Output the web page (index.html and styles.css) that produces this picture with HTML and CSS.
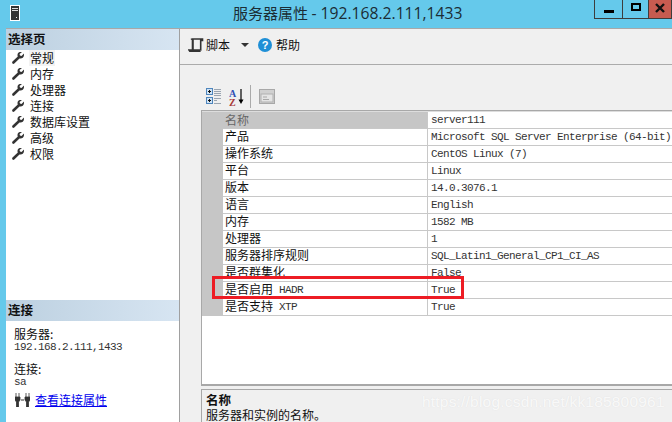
FILE: index.html
```html
<!DOCTYPE html>
<html lang="zh-CN">
<head>
<meta charset="utf-8">
<title>服务器属性</title>
<link rel="stylesheet" href="styles.css">
</head>
<body>
<div class="window">
  <header class="titlebar">
    <svg class="app-icon" width="10" height="16" viewBox="0 0 10 16"><rect width="10" height="16" fill="#fff"/><rect x="1" y="1" width="8" height="14" fill="#333"/><rect x="2" y="3" width="6" height="1" fill="#ddd"/><rect x="2" y="5" width="6" height="1" fill="#ddd"/><rect x="6" y="12" width="1" height="1" fill="#eee"/></svg>
    <div class="title">服务器属性 <span class="title-latin">- 192.168.2.111,1433</span></div>
    <div class="winbtns">
      <div class="winbtn btn-min"><span class="glyph-min"></span></div>
      <div class="winbtn btn-max"><span class="glyph-max"></span></div>
      <div class="winbtn close"><svg width="10" height="10" viewBox="0 0 10 10"><path d="M1 1l8 8M9 1l-8 8" stroke="#111" stroke-width="2.4"/></svg></div>
    </div>
  </header>
  <div class="body">
    <aside class="side">
      <div class="side-head">选择页</div>
      <ul class="pages">
        <li class="page"><svg class="wrench"><use href="#wr"/></svg><span class="page-label active">常规</span></li>
        <li class="page"><svg class="wrench"><use href="#wr"/></svg><span class="page-label">内存</span></li>
        <li class="page"><svg class="wrench"><use href="#wr"/></svg><span class="page-label">处理器</span></li>
        <li class="page"><svg class="wrench"><use href="#wr"/></svg><span class="page-label">连接</span></li>
        <li class="page"><svg class="wrench"><use href="#wr"/></svg><span class="page-label">数据库设置</span></li>
        <li class="page"><svg class="wrench"><use href="#wr"/></svg><span class="page-label">高级</span></li>
        <li class="page"><svg class="wrench"><use href="#wr"/></svg><span class="page-label">权限</span></li>
      </ul>
      <div class="side-head">连接</div>
      <div class="conn">
        <div class="conn-label">服务器:</div>
        <div class="mono conn-value">192.168.2.111,1433</div>
        <div class="conn-label second">连接:</div>
        <div class="mono conn-value">sa</div>
        <div class="conn-link-row">
          <svg width="15" height="14" viewBox="0 0 15 14"><path d="M1 0v4M4 0v4M0 4h5v3l-1.500 2v5h-2V9L0 7zM11 0v4M14 0v4M10 4h5v3l-1.500 2v5h-2V9L10 7z" fill="#333" stroke="#333" stroke-width=".8"/><path d="M6 7h3" stroke="#333"/></svg>
          <a class="conn-link" href="#">查看连接属性</a>
        </div>
      </div>
    </aside>
    <main class="main">
      <div class="toolbar">
        <svg width="16" height="14" viewBox="0 0 16 14"><path d="M4.500 1h10v1.500h-1.800v9.500H4.500zM3 1.500c1-1 2-.5 2 .5v9.500M1 12h9l1.500 1.500H2z" fill="none" stroke="#333" stroke-width="1.600"/></svg>
        <span class="tool-text">脚本</span>
        <span class="caret"></span>
        <span class="help">?</span>
        <span class="tool-text">帮助</span>
      </div>
      <div class="prop-tools">
        <svg class="ico-cat" width="16" height="17" viewBox="0 0 16 17"><rect x=".5" y=".5" width="6" height="6" fill="#cfe3f5" stroke="#4f86bd"/><path d="M2 3.500h3M3.500 2v3" stroke="#111"/><rect x=".5" y="9.500" width="6" height="6" fill="#cfe3f5" stroke="#4f86bd"/><path d="M2 12.500h3M3.500 11v3" stroke="#111"/><path d="M8 1.500h7M8 3.500h7M8 5.500h7M8 7.500h7M8 10.500h7M8 12.500h3M8 15.500h7" stroke="#9aa5b1"/></svg>
        <svg class="ico-az" width="15" height="18" viewBox="0 0 15 18"><text class="az-a" x="0" y="8.500">A</text><text class="az-z" x="0" y="17.500">Z</text><path d="M12 1v13" stroke="#000" stroke-width="1.200"/><path d="M9.500 11.500h5L12 16z" fill="#000"/></svg>
        <span class="tool-sep"></span>
        <svg class="ico-page" width="16" height="15" viewBox="0 0 16 15"><rect x=".5" y=".5" width="15" height="14" fill="#d0d0d0" stroke="#a8a8a8"/><rect x="2" y="5" width="12" height="8" fill="#e4e4e4" stroke="#b0b0b0"/><path d="M4 8h4M4 10.500h6" stroke="#a8a8a8"/></svg>
      </div>
      <section class="grid">
        <div class="row first selected"><div class="gutter"></div><div class="name">名称</div><div class="value mono">server111</div></div>
        <div class="row"><div class="gutter"></div><div class="name">产品</div><div class="value mono">Microsoft SQL Server Enterprise (64-bit)</div></div>
        <div class="row"><div class="gutter"></div><div class="name">操作系统</div><div class="value mono">CentOS Linux (7)</div></div>
        <div class="row"><div class="gutter"></div><div class="name">平台</div><div class="value mono">Linux</div></div>
        <div class="row"><div class="gutter"></div><div class="name">版本</div><div class="value mono">14.0.3076.1</div></div>
        <div class="row"><div class="gutter"></div><div class="name">语言</div><div class="value mono">English</div></div>
        <div class="row"><div class="gutter"></div><div class="name">内存</div><div class="value mono">1582 MB</div></div>
        <div class="row"><div class="gutter"></div><div class="name">处理器</div><div class="value mono">1</div></div>
        <div class="row"><div class="gutter"></div><div class="name">服务器排序规则</div><div class="value mono">SQL_Latin1_General_CP1_CI_AS</div></div>
        <div class="row"><div class="gutter"></div><div class="name">是否群集化</div><div class="value mono">False</div></div>
        <div class="row"><div class="gutter"></div><div class="name">是否启用<span class="mono name-latin"> HADR</span></div><div class="value mono">True</div></div>
        <div class="row"><div class="gutter"></div><div class="name">是否支持<span class="mono name-latin"> XTP</span></div><div class="value mono">True</div></div>
        <div class="highlight"></div>
      </section>
      <section class="desc">
        <div class="desc-title">名称</div>
        <div class="desc-text">服务器和实例的名称。</div>
      </section>
    </main>
  </div>
  <div class="watermark">https://blog.csdn.net/kk185800961</div>
</div>
<svg class="defs" width="0" height="0"><defs><symbol id="wr" viewBox="0 0 12 12"><path d="M12 1.500 9.500 4 8 3.500 7.500 2 10 0C8 -.5 5.500 .5 5.500 3c0 .8.100 1.200.3 1.500L.5 9.500c-.6.800-.4 1.500 0 2 .5.500 1.200.5 1.800 0l5.200-5.100c2.500.8 5-1.200 4.500-4.900z" fill="#333"/></symbol></defs></svg>
</body>
</html>
```
FILE: styles.css
```css
* { box-sizing: border-box; }
html, body { margin: 0; padding: 0; }
body { width: 672px; height: 422px; overflow: hidden; font-family: "Noto Sans CJK SC", sans-serif; font-size: 12px; color: #111; }
.defs { position: absolute; }
.window { position: relative; width: 672px; height: 422px; background: #65c9eb; display: flex; flex-direction: column; overflow: hidden; }
.mono { font-family: "Liberation Mono", "Noto Sans CJK SC", monospace; font-size: 11px; letter-spacing: -.6px; color: #333; }

.titlebar { height: 28px; flex: none; display: flex; align-items: flex-start; position: relative; padding-left: 10px; }
.app-icon { margin-top: 5px; }
.title { position: absolute; left: 233px; top: 2px; font-size: 15px; line-height: 22px; color: #1b2d35; white-space: nowrap; }
.title-latin { font-family: "Open Sans", sans-serif; font-size: 15.700px; }
.winbtns { margin-left: auto; display: flex; height: 19px; }
.winbtn { border: 1px solid #3d3d3d; border-top: none; display: flex; align-items: center; justify-content: center; margin-left: -1px; }
.btn-min { width: 29px; }
.btn-max { width: 27px; }
.winbtn.close { width: 24px; background: #c75b50; }
.glyph-min { width: 10px; height: 3px; background: #000; margin-top: 5px; }
.glyph-max { width: 10px; height: 8px; border: 2px solid #000; margin-top: -4px; }
.close svg { margin-top: -3px; }

.body { flex: 1; display: flex; margin-left: 6px; border-top: 1px solid #a8a8a8; min-height: 0; }
.side { width: 174px; flex: none; background: #fff; border-right: 1px solid #a0a0a0; display: flex; flex-direction: column; }
.side-head { height: 21px; flex: none; padding-left: 2px; font-weight: 700; font-size: 12.500px; line-height: 20px; background: linear-gradient(90deg, #bcd0e0, #d7e5f2); color: #111; }
.pages { list-style: none; margin: 0; padding: 0; flex: 1; }
.page { height: 16px; display: flex; align-items: center; }
.wrench { width: 12px; height: 12px; margin-left: 6px; }
.page-label { margin-left: 5px; padding: 0 1px; line-height: 16px; }
.page-label.active { background: #f3f3f3; }
.conn { height: 101px; flex: none; padding: 6px 0 0 8px; }
.conn-label { line-height: 14px; }
.conn-label.second { margin-top: 9px; }
.conn-value { line-height: 12px; }
.conn-link-row { display: flex; align-items: center; gap: 5px; margin-top: 4px; margin-left: 1px; }
.conn-link { color: #0000ee; text-decoration: underline; line-height: 15px; }

.main { flex: 1; min-width: 0; background: #f0f0f0; display: flex; flex-direction: column; }
.toolbar { height: 36px; flex: none; border-bottom: 1px solid #ababab; display: flex; align-items: center; padding: 0 0 4px 8px; }
.tool-text { margin-left: 2px; }
.caret { width: 0; height: 0; border: 4px solid transparent; border-top: 4px solid #333; border-bottom: none; margin: 1px 9px 0 11px; }
.help { width: 14px; height: 14px; border-radius: 50%; background: #1f8fd6; color: #fff; font: 700 11px/14px "Liberation Sans", sans-serif; text-align: center; margin-right: 2px; }
.prop-tools { height: 45px; flex: none; display: flex; align-items: flex-end; padding: 0 0 2px 26px; }
.ico-cat { margin-bottom: 3px; }
.ico-az { margin: 0 0 2px 7px; }
.az-a, .az-z { font: 700 10px "Liberation Serif", serif; }
.az-a { fill: #2f4fb5; }
.az-z { fill: #a83a3a; }
.tool-sep { width: 1px; height: 23px; background: #aaa; margin: 0 8px 0 6px; }
.ico-page { margin-bottom: 4px; }

.grid { position: relative; height: 276px; flex: none; margin: 0 -4px 0 21px; background: #fff; border: 2px solid #a8a8a8; border-width: 1px 1px 2px 1px; box-shadow: inset 0 1px 0 #ddd; padding-top: 1px; }
.row { display: flex; height: 17px; border-bottom: 1px solid #c8c8c8; }
.gutter { width: 21px; flex: none; background: #c6c6c6; margin-bottom: -1px; }
.name { width: 205px; flex: none; padding-left: 2px; border-right: 1px solid #c8c8c8; white-space: nowrap; line-height: 14px; }
.first .name { line-height: 16px; }
.name-latin { vertical-align: 1px; }
.value { flex: 1; padding-left: 3px; white-space: nowrap; line-height: 17px; }
.selected .name { background: #c6c6c6; color: #666; }
.highlight { position: absolute; left: 10px; top: 165px; width: 252px; height: 23px; border: 3px solid #ed1c24; }

.desc { margin: 3px -4px 0 21px; flex: 1; border: 2px solid #a8a8a8; border-width: 1px 1px 0 1px; padding: 3px 4px 0; line-height: 14px; }
.desc-title { font-weight: 700; font-size: 12.500px; }
.desc-text { margin-top: 1px; }

.watermark { position: absolute; left: 422px; top: 394px; font: 15.500px/16px "Liberation Sans", sans-serif; letter-spacing: .2px; color: rgba(255,255,255,.8); text-shadow: 0 0 1px rgba(190,190,190,.35); white-space: nowrap; }
```
